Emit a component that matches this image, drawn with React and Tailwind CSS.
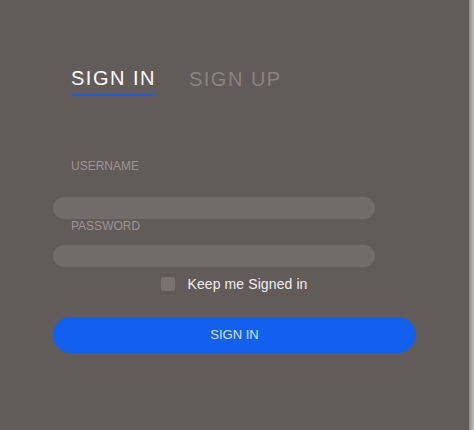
export default function App() {
  return (
    <div className="flex h-[430px] w-full" style={{ fontFamily: '"Liberation Sans", Arial, sans-serif' }}>
      <div className="flex w-[469px] flex-col bg-[#635a5a] pl-[53px] pt-[66px]">
        {/* tabs */}
        <div className="flex pl-[18px]">
          <button className="mr-[33px] border-b-2 border-[#1f5fe0] pb-[4px] text-[20px] leading-[24px] tracking-[1.5px] text-white">
            SIGN IN
          </button>
          <button className="pb-[4px] text-[20px] leading-[24px] tracking-[1.5px] text-[#8b8383]">
            SIGN UP
          </button>
        </div>

        <label className="mt-[63px] pl-[18px] text-[12px] leading-[14px] text-[#9d9595]">USERNAME</label>
        <input type="text" className="mt-[24px] h-[22px] w-[322px] rounded-full bg-[#736a6a] outline-none" />

        <label className="pl-[18px] text-[12px] leading-[14px] text-[#9d9595]">PASSWORD</label>
        <input type="password" className="mt-[12px] h-[22px] w-[322px] rounded-full bg-[#736a6a] outline-none" />

        <div className="mt-[10px] flex h-[14px] w-[363px] items-center justify-center gap-3">
          <span className="h-[14px] w-[14px] rounded-[2px] bg-[#7a7171]" />
          <span className="text-[14px] leading-[14px] tracking-[0.1px] text-[#eeeeee]">Keep me Signed in</span>
        </div>

        <button className="mt-[26px] h-[36px] w-[363px] rounded-full bg-[#1161ee] text-[13px] text-[#d7e4ff]">
          SIGN IN
        </button>
      </div>
      <div className="w-[5px] bg-gradient-to-r from-[#8e8a8a] to-[#c4c4c4]" />
    </div>
  );
}
